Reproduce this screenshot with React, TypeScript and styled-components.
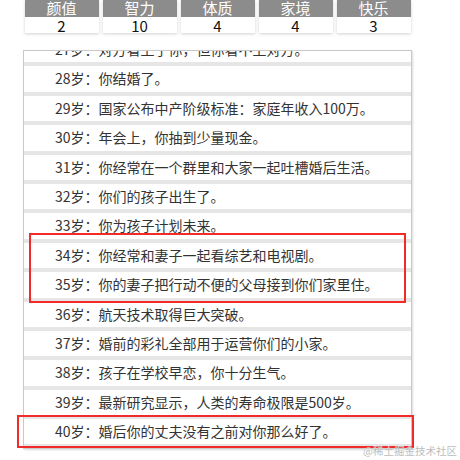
import React, { useLayoutEffect, useRef } from "react";
import styled, { createGlobalStyle } from "styled-components";

const Global = createGlobalStyle`
  html, body { margin: 0; padding: 0; background: #fff; }
  body { font-family: "Noto Sans CJK SC", "Noto Sans", sans-serif; }
`;

const Page = styled.div`
  position: relative;
  width: 460px;
  height: 460px;
  overflow: hidden;
  display: flex;
  flex-direction: column;
`;

const Stats = styled.div`
  display: grid;
  grid-template-columns: repeat(5, 74px);
  column-gap: 4px;
  margin-left: 24.5px;
`;

const StatCol = styled.div`
  display: flex;
  flex-direction: column;
  box-shadow: 0 1px 3px rgba(0, 0, 0, 0.18);
`;

const StatHead = styled.div`
  height: 16.5px;
  background: #8c8c8c;
  color: #fff;
  font-size: 15px;
  line-height: 18px;
  display: flex;
  align-items: flex-end;
  justify-content: center;
  overflow: hidden;
`;

const StatValue = styled.div`
  height: 16.5px;
  background: #fff;
  color: #111;
  font-size: 15px;
  line-height: 17px;
  text-align: center;
`;

const LogBox = styled.div`
  margin-top: 17px;
  margin-left: 23px;
  width: 387px;
  height: 397px;
  border: 1px solid #c9c9c9;
  box-shadow: 1px 1px 2px rgba(0, 0, 0, 0.15);
  overflow: hidden;
`;

const Row = styled.div`
  height: 25.4px;
  line-height: 25.4px;
  padding-left: 31px;
  border-bottom: 4px solid #e6e6e6;
  font-size: 14px;
  color: #333;
  white-space: nowrap;
`;

const Mark = styled.div<{ $l: number; $t: number; $w: number; $h: number }>`
  position: absolute;
  left: ${(p) => p.$l}px;
  top: ${(p) => p.$t}px;
  width: ${(p) => p.$w}px;
  height: ${(p) => p.$h}px;
  border: 2px solid #f22a2a;
  box-sizing: border-box;
  pointer-events: none;
`;

const Watermark = styled.div`
  position: absolute;
  right: 3px;
  bottom: 3px;
  font-size: 10.5px;
  line-height: 12px;
  color: #bdbdbd;
  text-shadow: 0 0 1px #fff;
`;

const stats = [
  ["颜值", "2"],
  ["智力", "10"],
  ["体质", "4"],
  ["家境", "4"],
  ["快乐", "3"],
];

const logs: [number, string][] = [
  [27, "对方看上了你，但你看不上对方。"],
  [28, "你结婚了。"],
  [29, "国家公布中产阶级标准：家庭年收入100万。"],
  [30, "年会上，你抽到少量现金。"],
  [31, "你经常在一个群里和大家一起吐槽婚后生活。"],
  [32, "你们的孩子出生了。"],
  [33, "你为孩子计划未来。"],
  [34, "你经常和妻子一起看综艺和电视剧。"],
  [35, "你的妻子把行动不便的父母接到你们家里住。"],
  [36, "航天技术取得巨大突破。"],
  [37, "婚前的彩礼全部用于运营你们的小家。"],
  [38, "孩子在学校早恋，你十分生气。"],
  [39, "最新研究显示，人类的寿命极限是500岁。"],
  [40, "婚后你的丈夫没有之前对你那么好了。"],
];

export default function App() {
  const boxRef = useRef<HTMLDivElement>(null);
  useLayoutEffect(() => {
    const el = boxRef.current;
    if (el) el.scrollTop = el.scrollHeight;
  }, []);
  return (
    <Page>
      <Global />
      <Stats>
        {stats.map(([k, v]) => (
          <StatCol key={k}>
            <StatHead>{k}</StatHead>
            <StatValue>{v}</StatValue>
          </StatCol>
        ))}
      </Stats>
      <LogBox ref={boxRef}>
        {logs.map(([age, text]) => (
          <Row key={age}>
            {age}岁：{text}
          </Row>
        ))}
      </LogBox>
      <Mark $l={29} $t={233} $w={377} $h={70} />
      <Mark $l={17} $t={415} $w={397} $h={33} />
      <Watermark>@稀土掘金技术社区</Watermark>
    </Page>
  );
}
